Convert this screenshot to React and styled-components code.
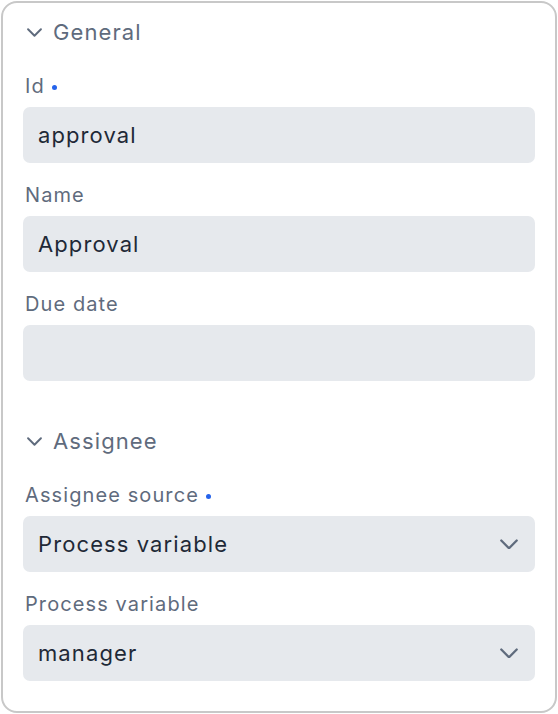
import React from "react";
import styled, { createGlobalStyle } from "styled-components";

const Global = createGlobalStyle`
  html, body { margin: 0; padding: 0; background: #ffffff; }
  body { font-family: Inter, "Noto Sans", "Liberation Sans", sans-serif; -webkit-font-smoothing: antialiased; }
  * { box-sizing: border-box; }
`;

const Page = styled.div`
  padding: 1px;
  width: 558px;
  height: 714px;
`;

const Frame = styled.div`
  width: 556px;
  height: 712px;
  border: 2px solid #c8c8c8;
  border-radius: 16px;
  background: #fff;
  padding: 15px 20px 0 20px;
  display: flex;
  flex-direction: column;
`;

const Section = styled.section`
  display: flex;
  flex-direction: column;
  margin-bottom: ${(p) => p.$mb || 0}px;
`;

const Header = styled.div`
  display: flex;
  align-items: center;
  gap: 11px;
  height: 28px;
  padding-left: 4px;
  color: #5f6b7d;
  font-size: 22px;
  letter-spacing: 1.1px;
  font-weight: 400;
  margin-bottom: 26px;
`;

const Field = styled.div`
  display: flex;
  flex-direction: column;
  margin-bottom: 18px;
`;

const Label = styled.div`
  height: 28px;
  line-height: 28px;
  font-size: 20px;
  letter-spacing: 1.1px;
  color: #5f6b7d;
  padding-left: 2px;
  margin-bottom: 7px;
  display: flex;
  align-items: center;
  gap: 7px;
`;

const Dot = styled.span`
  width: 5px;
  height: 5px;
  border-radius: 50%;
  background: #2563eb;
  display: inline-block;
  margin-top: 2px;
`;

const Input = styled.div`
  height: 56px;
  background: #e6e9ed;
  border-radius: 7px;
  padding: 0 15px;
  display: flex;
  align-items: center;
  justify-content: space-between;
  font-size: 22px;
  letter-spacing: 1.1px;
  color: #1f2937;
`;

const Chevron = ({ size = 14, color = "#5f6b7d" }) => (
  <svg width={size} height={size * 0.6} viewBox="0 0 14 8" fill="none">
    <path d="M1 1l6 6 6-6" stroke={color} strokeWidth="1.8" strokeLinecap="round" strokeLinejoin="round" />
  </svg>
);

const SelectIcon = styled.span`
  display: flex;
  align-items: center;
  margin-right: 2px;
`;

export default function App() {
  return (
    <>
      <Global />
      <Page>
        <Frame>
          <Section $mb={28}>
            <Header>
              <Chevron size={15} />
              General
            </Header>
            <Field>
              <Label>Id <Dot /></Label>
              <Input>approval</Input>
            </Field>
            <Field>
              <Label>Name</Label>
              <Input>Approval</Input>
            </Field>
            <Field>
              <Label>Due date</Label>
              <Input />
            </Field>
          </Section>
          <Section>
            <Header>
              <Chevron size={15} />
              Assignee
            </Header>
            <Field>
              <Label>Assignee source <Dot /></Label>
              <Input>
                Process variable
                <SelectIcon><Chevron size={18} /></SelectIcon>
              </Input>
            </Field>
            <Field>
              <Label>Process variable</Label>
              <Input>
                manager
                <SelectIcon><Chevron size={18} /></SelectIcon>
              </Input>
            </Field>
          </Section>
        </Frame>
      </Page>
    </>
  );
}
